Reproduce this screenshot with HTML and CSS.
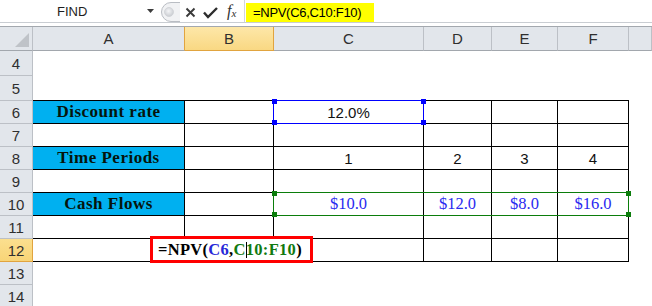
FILE: index.html
```html
<!DOCTYPE html>
<html>
<head>
<meta charset="utf-8">
<link rel="stylesheet" href="styles.css">
</head>
<body>
<div class="fbar">
  <div class="namebox"><span class="name">FIND</span>
    <svg class="dd" width="8" height="5" viewBox="0 0 8 5"><polygon points="0,0 7,0 3.5,4" fill="#3c3c3c"/></svg>
  </div>
  <div class="ctrls">
    <svg width="64" height="23" viewBox="0 0 64 23">
      <defs>
        <radialGradient id="kg" cx="0.45" cy="0.4" r="0.6">
          <stop offset="0" stop-color="#f4f5f7"/>
          <stop offset="1" stop-color="#c9ccd1"/>
        </radialGradient>
      </defs>
      <path d="M22,2.5 H13 A9.5,9.5 0 0 0 13,21.5 H22" fill="#f1f2f4" stroke="#b9bdc3" stroke-width="1"/>
      <circle cx="11" cy="12" r="4.5" fill="url(#kg)" stroke="#cfd2d6" stroke-width="0.8"/>
      <path d="M28.5,8.5 L36.5,16.5 M36.5,8.5 L28.5,16.5" stroke="#3a3a3a" stroke-width="1.9" fill="none"/>
      <path d="M46,12.5 L50,17 L59,8" stroke="#2d2d2d" stroke-width="2.4" fill="none"/>
    </svg>
    <span class="fx"><i>f</i><sub>x</sub></span>
  </div>
  <div class="finput"><span class="hl">=NPV(C6,C10:F10)</span></div>
</div>
<div class="fpad"></div>
<div class="sheet">
  <div class="ch corner"><svg width="32" height="23" viewBox="0 0 32 23"><polygon points="29,6 29,20 15,20" fill="#bfc3c8"/></svg></div>
  <div class="ch sel-left">A</div>
  <div class="ch active">B</div>
  <div class="ch">C</div>
  <div class="ch">D</div>
  <div class="ch">E</div>
  <div class="ch">F</div>
  <div class="ch"></div>

  <div class="rh">4</div><div></div><div></div><div></div><div></div><div></div><div></div><div></div>

  <div class="rh">5</div><div class="tb"></div><div class="tb"></div><div class="tb"></div><div class="tb"></div><div class="tb"></div><div class="tb"></div><div></div>

  <div class="rh">6</div>
  <div class="t lab">Discount rate</div><div class="t"></div><div class="t num">12.0%</div><div class="t"></div><div class="t"></div><div class="t"></div><div></div>

  <div class="rh">7</div>
  <div class="t"></div><div class="t"></div><div class="t"></div><div class="t"></div><div class="t"></div><div class="t"></div><div></div>

  <div class="rh">8</div>
  <div class="t lab">Time Periods</div><div class="t"></div><div class="t num">1</div><div class="t num">2</div><div class="t num">3</div><div class="t num">4</div><div></div>

  <div class="rh">9</div>
  <div class="t"></div><div class="t"></div><div class="t"></div><div class="t"></div><div class="t"></div><div class="t"></div><div></div>

  <div class="rh">10</div>
  <div class="t lab">Cash Flows</div><div class="t"></div><div class="t cur">$10.0</div><div class="t cur">$12.0</div><div class="t cur">$8.0</div><div class="t cur">$16.0</div><div></div>

  <div class="rh">11</div>
  <div class="t"></div><div class="t"></div><div class="t"></div><div class="t"></div><div class="t"></div><div class="t"></div><div></div>

  <div class="rh active-row">12</div>
  <div class="t"></div><div class="t"></div><div class="t"></div><div class="t"></div><div class="t"></div><div class="t"></div><div></div>

  <div class="rh">13</div><div></div><div></div><div></div><div></div><div></div><div></div><div></div>
  <div class="rh">14</div><div></div><div></div><div></div><div></div><div></div><div></div><div></div>

  <div class="sel sel-c6">
    <span class="hd tl"></span><span class="hd tr"></span><span class="hd bl"></span><span class="hd br"></span>
  </div>
  <div class="sel sel-flows">
    <span class="hd tl"></span><span class="hd tr"></span><span class="hd bl"></span><span class="hd br"></span>
  </div>
  <div class="edit"><span class="k">=NPV(</span><span class="b">C6</span><span class="k">,</span><span class="g">C</span><span class="caret"></span><span class="g">10:F10</span><span class="k">)</span></div>
</div>
</body>
</html>
```

FILE: styles.css
```css
* { box-sizing: border-box; }
html, body { margin: 0; padding: 0; }
body {
  width: 652px;
  height: 306px;
  overflow: hidden;
  background: #fff;
  font-family: "Liberation Sans", Arial, sans-serif;
}

/* formula bar */
.fbar {
  display: flex;
  height: 23px;
  border-bottom: 1px solid #c9cdd2;
  background: #fff;
}
.namebox {
  width: 158px;
  display: flex;
  align-items: center;
  padding-left: 57px;
  font-size: 13px;
  color: #1e1e1e;
}
.namebox .dd { margin-left: auto; margin-right: 3px; margin-top: 1px; }
.ctrls {
  width: 86px;
  display: flex;
  align-items: center;
}
.ctrls svg { display: block; }
.fx {
  margin-left: 5px;
  font-family: "Liberation Serif", serif;
  color: #333;
  font-size: 16px;
  line-height: 1;
}
.fx i { font-style: italic; }
.fx sub { font-size: 11px; font-style: italic; vertical-align: -1px; }
.finput {
  flex: 1;
  border-left: 1px solid #d3d6da;
  padding-left: 1px;
}
.hl {
  display: block;
  margin-top: 3px;
  width: 128px;
  height: 19px;
  line-height: 19px;
  background: #ffff00;
  padding-left: 7px;
  font-size: 13px;
  letter-spacing: -0.3px;
  color: #000;
}
.fpad {
  height: 4px;
  border-bottom: 1px solid #a3a8ae;
}

/* sheet */
.sheet {
  position: relative;
  display: grid;
  grid-template-columns: 33px 152px 89px 150px 68px 66px 71px 23px;
  grid-template-rows: 24px 25px 25px repeat(9, 23px);
}
.ch {
  background: #e2e6eb;
  border-right: 1px solid #bcc0c6;
  border-bottom: 1px solid #a2a7ad;
  display: flex;
  align-items: center;
  justify-content: center;
  font-size: 15px;
  color: #2f2f2f;
}
.ch.corner { display: block; }
.ch.corner svg { display: block; }
.ch.sel-left { border-right-color: #e1a43f; }
.ch.active {
  background: linear-gradient(#fde7a8, #f9d883);
  border-right-color: #e1a43f;
  border-bottom-color: #e1a43f;
}
.rh {
  background: #e2e6eb;
  border-right: 1px solid #bcc0c6;
  border-bottom: 1px solid #bcc0c6;
  display: flex;
  align-items: center;
  justify-content: center;
  font-size: 15px;
  color: #2f2f2f;
}
.rh.active-row {
  background: linear-gradient(#fbdf8f, #f8d477);
  border-bottom-color: #e1a43f;
  border-right-color: #e1a43f;
}
.tb { border-bottom: 1px solid #000; }
.t {
  border-right: 1px solid #000;
  border-bottom: 1px solid #000;
  display: flex;
  align-items: center;
  justify-content: center;
}
.lab {
  background: #00b0f0;
  font-family: "Liberation Serif", serif;
  font-weight: bold;
  font-size: 17px;
  letter-spacing: 0.5px;
  color: #06140c;
}
.num {
  font-size: 15px;
  color: #111;
}
.cur {
  font-family: "Liberation Serif", serif;
  font-size: 16.5px;
  color: #2a2af0;
}

/* selection overlays */
.sel { position: absolute; }
.sel-c6 {
  left: 273px;
  top: 73px;
  width: 151px;
  height: 24px;
  border: 1px solid #0000ff;
}
.sel-flows {
  left: 273px;
  top: 165px;
  width: 356px;
  height: 24px;
  border: 1px solid #0b7d0b;
}
.hd { position: absolute; width: 5px; height: 5px; }
.sel-c6 .hd { background: #0000ff; }
.sel-flows .hd { background: #0b7d0b; }
.hd.tl { left: -2px; top: -2px; }
.hd.tr { right: -3px; top: -2px; }
.hd.bl { left: -2px; bottom: -2px; }
.hd.br { right: -3px; bottom: -2px; }

.edit {
  position: absolute;
  left: 150px;
  top: 209px;
  width: 163px;
  height: 27px;
  border: 3px solid #ff0000;
  background: #fff;
  display: flex;
  align-items: center;
  padding-left: 5px;
  font-family: "Liberation Serif", serif;
  font-weight: bold;
  font-size: 16.5px;
  letter-spacing: 0.3px;
}
.edit .k { color: #000; }
.edit .b { color: #2828d8; }
.edit .g { color: #117a11; }
.edit .caret {
  display: inline-block;
  width: 1px;
  height: 16px;
  background: #000;
  margin-right: -1px;
}
```
